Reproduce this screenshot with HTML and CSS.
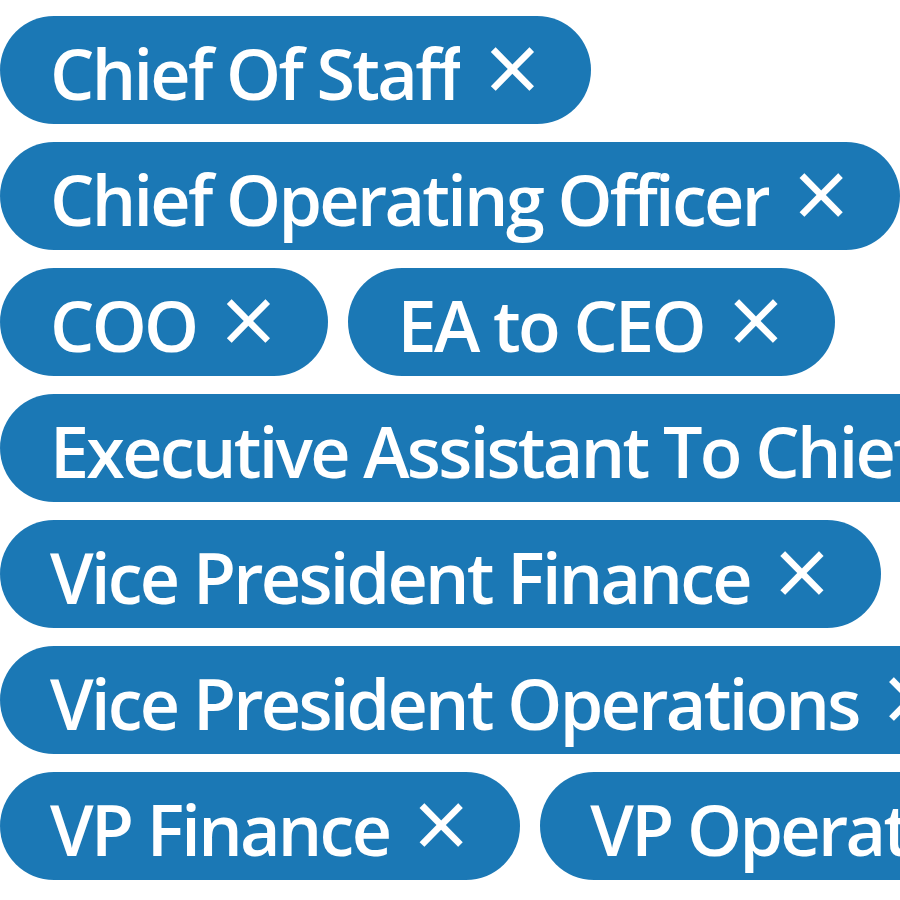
FILE: index.html
```html
<!DOCTYPE html>
<html>
<head>
<meta charset="utf-8">
<link rel="stylesheet" href="styles.css">
</head>
<body>
<div class="tags">
  <span class="tag"><span class="label">Chief Of Staff</span><span class="x">×</span></span>
  <span class="tag"><span class="label">Chief Operating Officer</span><span class="x">×</span></span>
  <span class="tag"><span class="label">COO</span><span class="x">×</span></span>
  <span class="tag"><span class="label">EA to CEO</span><span class="x">×</span></span>
  <span class="tag"><span class="label">Executive Assistant To Chief Operating Officer</span><span class="x">×</span></span>
  <span class="tag"><span class="label">Vice President Finance</span><span class="x">×</span></span>
  <span class="tag"><span class="label">Vice President Operations</span><span class="x">×</span></span>
  <span class="tag"><span class="label">VP Finance</span><span class="x">×</span></span>
  <span class="tag"><span class="label">VP Operations</span><span class="x">×</span></span>
</div>
</body>
</html>
```
FILE: styles.css
```css
html, body {
  margin: 0;
  padding: 0;
  background: #ffffff;
  overflow: hidden;
}
.tags {
  width: 1200px;
  display: flex;
  flex-wrap: wrap;
  row-gap: 18px;
  column-gap: 20px;
  padding-top: 16px;
  font-family: "Open Sans", "Noto Sans", sans-serif;
  font-size: 70px;
  font-weight: 600;
  letter-spacing: -2.7px;
  color: #ffffff;
}
.tag {
  display: inline-flex;
  align-items: flex-start;
  height: 108px;
  box-sizing: border-box;
  padding: 0 51px 0 50px;
  background: #1b78b5;
  border-radius: 54px;
  white-space: nowrap;
}
.label {
  display: block;
  box-sizing: border-box;
  height: 101px;
  padding-top: 3px;
  line-height: 108px;
  overflow: hidden;
}
.x {
  display: block;
  flex: none;
  margin-left: 24px;
  margin-top: -4px;
  font-size: 98px;
  font-weight: 400;
  letter-spacing: 0;
  line-height: 108px;
}
```
